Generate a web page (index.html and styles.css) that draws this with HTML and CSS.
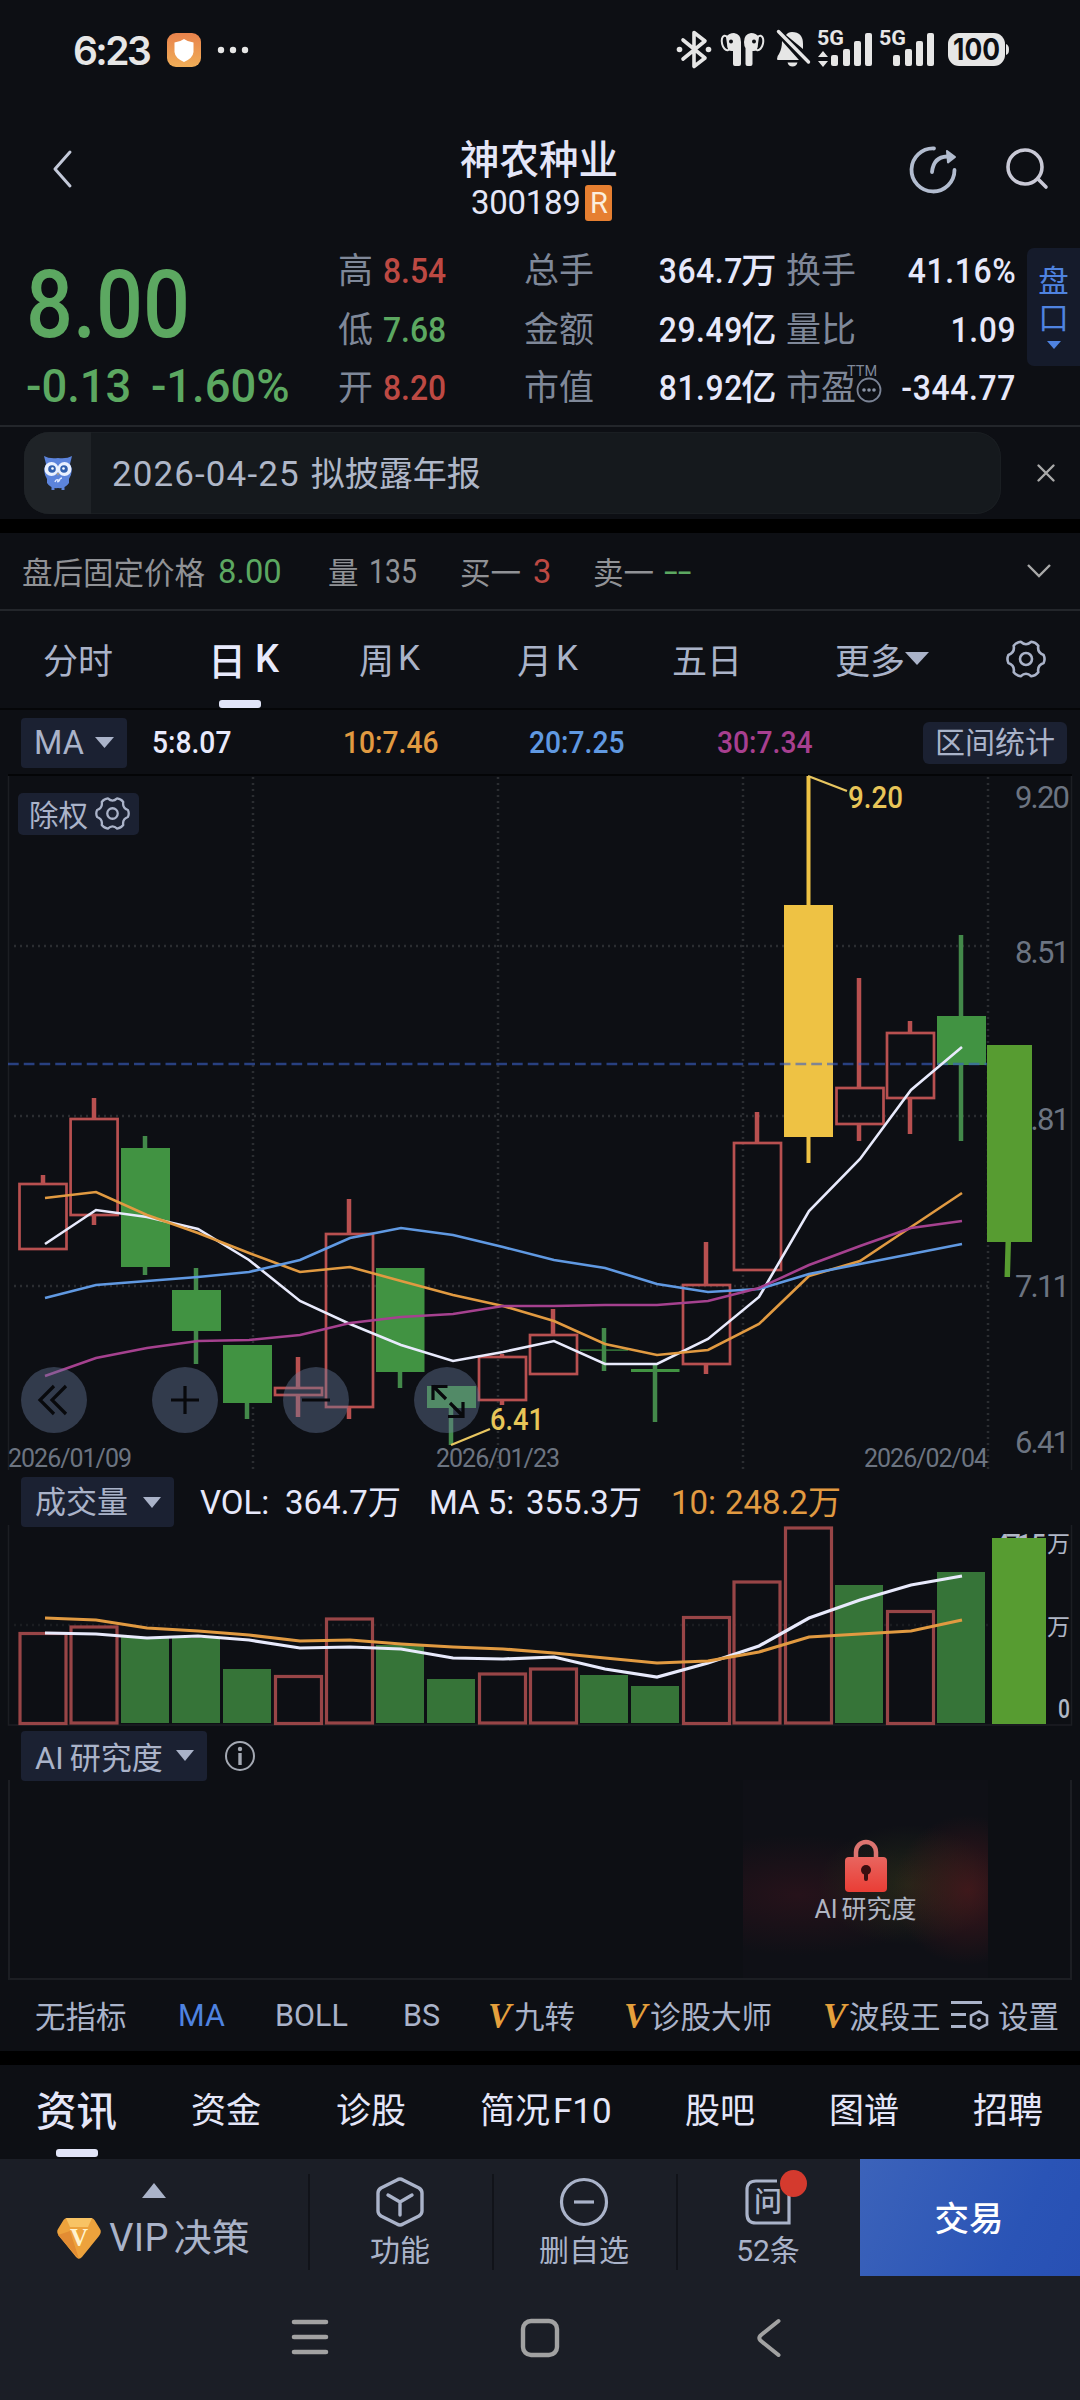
FILE: index.html
```html
<!DOCTYPE html>
<html lang="zh-CN">
<head>
<meta charset="utf-8">
<title>神农种业 300189</title>
<link rel="stylesheet" href="styles.css">
</head>
<body>
<svg class="defs" width="0" height="0">
  <symbol id="gear" viewBox="-20 -20 40 40">
    <path d="M17.6 -4Q19.500 0 17.6 4Q11 6.400 12.3 13.2Q9.5 16.8 5.3 17.2Q0 12.300 -5.3 17.2Q-9.5 16.8 -12.3 13.2Q-11 6.400 -17.6 4Q-19.500 0 -17.6 -4Q-11 -6.400 -12.3 -13.2Q-9.5 -16.8 -5.3 -17.2Q0 -12.300 5.3 -17.2Q9.5 -16.8 12.3 -13.2Q11 -6.400 17.6 -4Z" fill="none" stroke="currentColor" stroke-width="2.6" stroke-linejoin="round"/>
    <circle r="6" fill="none" stroke="currentColor" stroke-width="2.6"/>
  </symbol>
</svg>
<main class="screen">
  <header class="status">
    <span class="clock">6:23</span>
    <svg class="guard" width="34" height="34" viewBox="0 0 34 34"><defs><linearGradient id="og" x1="0" y1="0" x2="0" y2="1"><stop offset="0" stop-color="#e8824c"/><stop offset="1" stop-color="#f0ae58"/></linearGradient></defs><rect width="34" height="34" rx="9" fill="url(#og)"/><path d="M17 6Q21 9 26.500 9.500V19Q26 25 17 29Q8 25 7.500 19V9.500Q13 9 17 6Z" fill="#fff"/></svg>
    <svg class="dots" width="32" height="8" viewBox="0 0 32 8" fill="#e6e6e6"><circle cx="4" cy="4" r="3.200"/><circle cx="16" cy="4" r="3.200"/><circle cx="28" cy="4" r="3.200"/></svg>
    <svg class="radio" width="340" height="44" viewBox="672 28 340 44" fill="#e6e6e6">
      <path d="M683 40L705 58L694 66.500V32.500L705 41L683 59" fill="none" stroke="#e6e6e6" stroke-width="3.600" stroke-linejoin="round" stroke-linecap="round"/>
      <circle cx="679.500" cy="49.500" r="2.800"/><circle cx="708.500" cy="49.500" r="2.800"/>
      <g id="buds">
        <ellipse cx="726" cy="43" rx="4" ry="7.400" transform="rotate(-14 726 43)" fill="none" stroke="#e6e6e6" stroke-width="2"/>
        <path d="M726 37Q729 33 734 33Q741 34 741 42V64Q741 66 739 66H735Q733 66 733 64V51Q727 52 727 44Z"/><circle cx="731" cy="41.500" r="2" fill="#0d0f14"/>
        <ellipse cx="759" cy="43" rx="4" ry="7.400" transform="rotate(14 759 43)" fill="none" stroke="#e6e6e6" stroke-width="2"/>
        <path d="M759 37Q756 33 751 33Q744 34 744 42Q744 46 745.500 48V64Q745.500 66 747.500 66H750.500Q752.500 66 752.500 64V51Q758 52 758 44Z"/><circle cx="754" cy="41.500" r="2" fill="#0d0f14"/>
      </g>
      <path d="M777 59q0-3 2-5q3-5 3-13l17 19h-21q-1 0-1-1zM786 35q2-3 6-3q11 0 11 12v5zM787.500 62.500h10q-1 4-5 4t-5-4z"/>
      <path d="M778.500 31.500l30 30.500" stroke="#e6e6e6" stroke-width="3.400" stroke-linecap="round"/>
      <text x="817" y="45" class="gen" textLength="27" lengthAdjust="spacingAndGlyphs">5G</text>
      <path d="M823 51l5 6h-10zM823 67l-5-6h10z"/>
      <rect x="831" y="55" width="7" height="11" rx="2"/><rect x="843" y="49" width="7" height="17" rx="2"/><rect x="854" y="41" width="7" height="25" rx="2"/><rect x="865" y="33" width="7" height="33" rx="2"/>
      <text x="879" y="45" class="gen" textLength="27" lengthAdjust="spacingAndGlyphs">5G</text>
      <rect x="893" y="55" width="7" height="11" rx="2"/><rect x="905" y="49" width="7" height="17" rx="2"/><rect x="916" y="41" width="7" height="25" rx="2"/><rect x="927" y="33" width="7" height="33" rx="2"/>
      <rect x="948" y="33" width="57" height="33" rx="11"/><path d="M1006 44q3 1 3 5.500t-3 5.500z"/>
      <text x="953" y="60" class="batt" textLength="47" lengthAdjust="spacingAndGlyphs">100</text>
    </svg>
  </header>

  <nav class="titlebar">
    <svg width="20" height="40" viewBox="0 0 20 40" fill="none" stroke="#c3c9d9" stroke-width="3" stroke-linecap="round" stroke-linejoin="round"><path d="M17 3L2 20L17 37"/></svg>
    <div class="name"><h1>神农种业</h1><div class="code"><span>300189</span><b>R</b></div></div>
    <svg width="48" height="48" viewBox="0 0 48 48" fill="none" stroke="#b2bccf" stroke-width="3.800" stroke-linecap="round"><path d="M25 3.500A21.500 21.500 0 1 0 45.500 25"/><path d="M23 27Q24.500 12 38 11.500"/><path d="M38 6L46 12L39 17.500Z" fill="#b2bccf" stroke-width="2" stroke-linejoin="round"/></svg>
    <svg width="46" height="46" viewBox="1 0 46 46" fill="none" stroke="#c9c9d6" stroke-width="3.600" stroke-linecap="round"><circle cx="21" cy="21" r="17"/><path d="M34 33L42 41"/></svg>
  </nav>

  <section class="quote">
    <div class="price down"><div class="last">8.00</div><div class="chg"><span>-0.13</span><span>-1.60%</span></div></div>
    <dl class="stats">
      <dt>高</dt><dd class="up l">8.54</dd><dt>总手</dt><dd class="u">364.7<i>万</i></dd><dt>换手</dt><dd>41.16%</dd>
      <dt>低</dt><dd class="down l">7.68</dd><dt>金额</dt><dd class="u">29.49<i>亿</i></dd><dt>量比</dt><dd>1.09</dd>
      <dt>开</dt><dd class="up l">8.20</dd><dt>市值</dt><dd class="u">81.92<i>亿</i></dd><dt class="pe">市盈<sup>TTM</sup><svg width="26" height="26" viewBox="-13 -13 26 26"><circle r="11.500" fill="none" stroke="#7b8496" stroke-width="1.800"/><g fill="#8b94a6"><circle cx="-5" r="1.800"/><circle r="1.800"/><circle cx="5" r="1.800"/></g></svg></dt><dd>-344.77</dd>
    </dl>
    <div class="pankou"><span>盘</span><span>口</span><svg width="14" height="8"><path d="M0 0h14l-7 8z" fill="#4f83e0"/></svg></div>
  </section>

  <section class="notice">
    <div class="pill">
      <div class="owl"><svg width="34" height="36" viewBox="0 0 34 36"><path d="M3 1Q8 4 17 3Q26 4 31 1L29 9Q33 16 28 24V28Q24 34 17 33Q10 34 6 28V24Q1 16 5 9Z" fill="#5c84dc"/><circle cx="10.500" cy="14" r="7" fill="#e9f0ff"/><circle cx="23.500" cy="14" r="7" fill="#e9f0ff"/><circle cx="11" cy="14" r="3.800" fill="#315fae"/><circle cx="23" cy="14" r="3.800" fill="#315fae"/><circle cx="11.500" cy="13.500" r="1.300" fill="#fff"/><circle cx="22.500" cy="13.500" r="1.300" fill="#fff"/><path d="M15.500 18h3l-1.500 3z" fill="#a89a86"/><path d="M14 27q1-3 3-2q-1 3 1 1q1-3 3-3" stroke="#dbe6ff" fill="none" stroke-width="1.500"/><path d="M12 32v3M22 32v3" stroke="#5c84dc" stroke-width="3"/></svg></div>
      <p><time>2026-04-25</time>拟披露年报</p>
    </div>
    <svg width="18" height="18" viewBox="0 0 18 18" stroke="#a9a9a9" stroke-width="2.400" stroke-linecap="round"><path d="M1.500 1.500l15 15M16.500 1.500l-15 15"/></svg>
  </section>

  <section class="after">
    <span>盘后固定价格</span><span class="down n">8.00</span><span>量</span><span class="n q">135</span><span>买一</span><span class="up n">3</span><span>卖一</span><span class="down n dash">--</span>
    <svg width="24" height="14" viewBox="0 0 24 14" fill="none" stroke="#a9a9a9" stroke-width="2.400"><path d="M1 1l11 11l11-11"/></svg>
  </section>

  <nav class="periods">
    <a>分时</a><a class="on">日<em>K</em></a><a>周<em>K</em></a><a>月<em>K</em></a><a>五日</a><a>更多<svg width="24" height="13"><path d="M0 0h24l-12 13z" fill="#aab3c9"/></svg></a>
    <svg class="gear" width="40" height="40"><use href="#gear"/></svg>
  </nav>

  <section class="marow">
    <button class="sel">MA<svg width="19" height="11"><path d="M0 0h19l-9.500 11z"/></svg></button>
    <span class="c5">5:8.07</span><span class="c10">10:7.46</span><span class="c20">20:7.25</span><span class="c30">30:7.34</span>
    <button class="range">区间统计</button>
  </section>

  <section class="kline">
    <svg width="1080" height="704" viewBox="0 770 1080 704">
      <path d="M8.500 775.500V1470M1071.500 775.500V1470" class="frame"/><path d="M8 775H1072" stroke="#040507" stroke-width="2"/>
      <path d="M253 777V1469M498 777V1469M743 777V1469M988 777V1469" class="grid"/>
      <path d="M14 946H988M14 1116H988M14 1286H988" class="grid"/>
      <path class="wick red" d="M43 1175V1183M94 1098V1119M94 1215V1225M298 1357V1388M298 1395V1417M349 1199V1234M349 1407V1419M502 1354V1357M502 1400V1405M553 1309V1335M706 1242V1285M706 1364V1374M757 1112V1143M859 978V1088M859 1124V1141M910 1021V1033M910 1098V1134"/>
      <g class="red box">
        <rect x="19.500" y="1184" width="47" height="65"/><rect x="70.600" y="1119" width="47" height="96"/>
        <rect x="275" y="1388" width="47" height="7"/><rect x="326" y="1234" width="47" height="173"/>
        <rect x="479" y="1357" width="47" height="43"/><rect x="530" y="1335" width="47" height="39"/>
        <rect x="683" y="1285" width="47" height="79"/><rect x="734" y="1143" width="47" height="127"/>
        <rect x="836.500" y="1088" width="47" height="36"/><rect x="887" y="1033" width="47" height="65"/>
      </g>
      <g fill="#419342">
        <rect x="121" y="1148" width="49" height="119"/><rect x="172" y="1290" width="49" height="41"/><rect x="223" y="1345" width="49" height="58"/><rect x="376" y="1268" width="48.500" height="104"/><rect x="427" y="1386" width="49" height="22"/><rect x="580" y="1349.500" width="48" height="1.200"/><rect x="631" y="1369" width="48.500" height="3"/><rect x="937" y="1016" width="49" height="49"/>
      </g>
      <path class="wick" stroke="#43894a" d="M145 1136V1148M145 1267V1275M196 1268V1290M196 1331V1364M247 1403V1419M400 1372V1388M451 1408V1445M604 1328V1371M655 1363V1422M961 935V1016M961 1065V1141"/>
      <rect x="784" y="905" width="49" height="232" fill="#eec244"/>
      <path d="M808.500 776V905M808.500 1137V1163" stroke="#eec244" stroke-width="4"/>
      <path d="M8 1064H987" stroke="#3a5fc4" stroke-opacity=".62" stroke-width="2.400" stroke-dasharray="10.700 5.050"/>
      <g class="ma">
        <polyline stroke="#e8eafc" points="45,1244 96,1210 147,1217 198,1229 249,1260 300,1301 350,1324 401,1345 453,1361 503,1352 554,1341 605,1364 657,1364 708,1339 759,1297 809,1211 860,1159 911,1090 962,1047"/>
        <polyline stroke="#e19a41" points="45,1198 96,1192 147,1215 198,1233 249,1253 300,1272 350,1267 401,1281 453,1295 503,1306 554,1321 605,1344 657,1355 708,1350 759,1324 809,1276 860,1261 911,1227 962,1193"/>
        <polyline stroke="#6099e2" points="45,1298 96,1285 147,1281 198,1277 249,1272 300,1260 350,1238 401,1228 453,1235 503,1247 554,1260 605,1268 657,1284 708,1292 759,1289 809,1274 860,1264 911,1254 962,1244"/>
        <polyline stroke="#a5418f" points="45,1376 96,1358 147,1348 198,1341 249,1340 300,1335 350,1323 401,1317 453,1314 503,1306 554,1306 605,1305 657,1305 708,1301 759,1288 809,1265 860,1246 911,1228 962,1221"/>
      </g>
      <path d="M808 776L847 791M451 1445L490 1429" stroke="#e8c660" stroke-width="2.400"/>
      <g class="lab" fill="#e8c558"><text x="848" y="808" textLength="55" lengthAdjust="spacingAndGlyphs">9.20</text><text x="490" y="1430" textLength="54" lengthAdjust="spacingAndGlyphs">6.41</text></g>
      <g class="lab axis"><text x="1015" y="808" textLength="55">9.20</text><text x="1015" y="963" textLength="55">8.51</text><text x="1015" y="1130" textLength="55">7.81</text><text x="1015" y="1297" textLength="55">7.11</text><text x="1015" y="1453" textLength="55">6.41</text></g>
      <g class="date"><text x="8" y="1467" textLength="124">2026/01/09</text><text x="436" y="1467" textLength="124">2026/01/23</text><text x="864" y="1467" textLength="124">2026/02/04</text></g>
      <path d="M987 1045H1032V1242H1011L1010 1277H1004.500L1005.500 1242H987Z" fill="#579c31"/>
      <g fill="#6b7c9f" fill-opacity=".4"><circle cx="54" cy="1400" r="33"/><circle cx="185" cy="1400" r="33"/><circle cx="316" cy="1400" r="33"/><circle cx="447" cy="1400" r="33"/></g>
      <g fill="none" stroke="#08090c" stroke-width="3.200">
        <path d="M54 1386L40 1400L54 1414M66 1386L52 1400L66 1414M171 1400H199M185 1386V1414M302 1400H330M433 1386L446 1399M447.500 1386.500H433V1400M450 1403L463 1416M463 1402V1416.500H448"/>
      </g>
    </svg>
    <button class="chuquan">除权<svg width="35" height="35"><use href="#gear"/></svg></button>
  </section>

  <section class="volrow">
    <button class="sel">成交量<svg width="18" height="11"><path d="M0 0h18l-9 11z"/></svg></button>
    <span>VOL:</span><span>364.7万</span><span>MA 5:</span><span>355.3万</span><span class="c10">10:</span><span class="c10">248.2万</span>
  </section>

  <section class="vol">
    <svg width="1080" height="204" viewBox="0 1525 1080 204">
      <path d="M8.500 1525V1725H1071.500V1525" class="frame"/><path d="M14 1625H988" class="grid faint"/>
      <g class="lab small" fill="#b0b7c6"><text x="995" y="1553" textLength="51">471.5</text><text x="1047" y="1552" class="cj">万</text><text x="995" y="1636" textLength="50">335.8</text><text x="1047" y="1635" class="cj">万</text><text x="1058" y="1718" textLength="12" lengthAdjust="spacingAndGlyphs">0</text></g>
      <g class="red box v">
        <rect x="20" y="1633.500" width="46" height="90"/><rect x="71" y="1627" width="46" height="96"/><rect x="275.500" y="1676.500" width="46" height="47"/><rect x="326.500" y="1619" width="46" height="104"/><rect x="479.500" y="1674" width="46" height="49"/><rect x="530.500" y="1669" width="46" height="54"/><rect x="683.500" y="1617.500" width="46" height="106"/><rect x="734" y="1582" width="46" height="141"/><rect x="785.500" y="1528" width="46" height="195"/><rect x="887.500" y="1611.500" width="46" height="112"/>
      </g>
      <path fill="#367438" d="M121 1637h48v86h-48zM172 1638h48v85h-48zM223 1669h48v54h-48zM376 1645h48v78h-48zM427 1679h48v44h-48zM580 1675h48v48h-48zM631 1686h48v37h-48zM835 1585h48v138h-48zM937 1572h48v151h-48z"/>
      <g class="ma v">
        <polyline stroke="#e8eafc" points="45,1633 96,1634 147,1638 198,1636 249,1640 300,1648 350,1647 401,1649 453,1658 503,1659 554,1657 605,1669 657,1677 708,1663 759,1646 809,1618 860,1600 911,1585 962,1576"/>
        <polyline stroke="#e19a41" points="45,1618 96,1620 147,1628 198,1631 249,1635 300,1641 350,1640 401,1644 453,1647 503,1649 554,1653 605,1658 657,1663 708,1661 759,1652 809,1637 860,1634 911,1631 962,1620"/>
      </g>
      <rect x="992" y="1538" width="54" height="186" fill="#579c31"/>
    </svg>
  </section>

  <section class="airow">
    <button class="sel"><span><em>AI</em>研究度</span><svg width="18" height="11"><path d="M0 0h18l-9 11z"/></svg></button>
    <svg width="32" height="32" viewBox="-16 -16 32 32" fill="#a4a9b3"><circle r="14" fill="none" stroke="#a4a9b3" stroke-width="2"/><circle cy="-7" r="2.200"/><rect x="-1.700" y="-3" width="3.400" height="12"/></svg>
  </section>
  <section class="ai">
    <div class="lockpane">
      <svg width="42" height="53" viewBox="0 0 42 53"><defs><linearGradient id="lk" x1="0" y1="0" x2="0" y2="1"><stop offset="0" stop-color="#e8655f"/><stop offset="1" stop-color="#ea3d35"/></linearGradient></defs><path d="M11 20V13A10 10 0 0 1 31 13V20" fill="none" stroke="#dc7470" stroke-width="4.500"/><rect y="18" width="42" height="35" rx="4" fill="url(#lk)"/><circle cx="21" cy="31" r="5" fill="#3a0e10"/><rect x="19" y="32" width="4" height="10" rx="2" fill="#3a0e10"/></svg>
      <span><em>AI</em>研究度</span>
    </div>
  </section>

  <nav class="indicators">
    <a>无指标</a><a class="sel-i">MA</a><a>BOLL</a><a>BS</a><a><b>V</b>九转</a><a><b>V</b>诊股大师</a><a><b>V</b>波段王</a>
    <svg width="38" height="30" viewBox="0 0 38 30" fill="none" stroke="#aab3c9" stroke-width="3.200"><path d="M0 2.500H31M0 14.500H15M0 26.500H15"/><path d="M28 11.500L36 15.500V24.500L28 28.500L20 24.500V15.500Z" stroke-width="2.600"/><circle cx="28" cy="20" r="2" fill="#aab3c9" stroke="none"/></svg>
    <a>设置</a>
  </nav>

  <nav class="infotabs"><a class="on">资讯</a><a>资金</a><a>诊股</a><a>简况<em>F10</em></a><a>股吧</a><a>图谱</a><a>招聘</a></nav>

  <footer class="actions">
    <div class="vip">
      <svg class="tri" width="24" height="15"><path d="M12 0l12 15H0z" fill="#aab3c9"/></svg>
      <div class="viprow"><svg width="44" height="43" viewBox="0 0 44 43"><path d="M10 1H34Q36 1 37.500 3L43 12Q45 15 42 19L25 40Q22 43.500 19 40L2 19Q-1 15 1 12L6.500 3Q8 1 10 1Z" fill="#eda23c"/><path d="M9 1H35L31 10H13Z" fill="#f8c364"/><path d="M1 18L13 14L22 42Z" fill="#e28c33"/><text x="22" y="29" text-anchor="middle" class="gemv">V</text></svg><span><em>VIP</em>决策</span></div>
    </div>
    <div class="act"><svg width="50" height="50" viewBox="-25 -25 50 50" fill="none" stroke="#aab3c9" stroke-width="3.400" stroke-linejoin="round" stroke-linecap="round"><path d="M-3-22Q0-24 3-22L19-14Q22-12 22-9V9Q22 12 19 14L3 22Q0 24-3 22L-19 14Q-22 12-22 9V-9Q-22-12-19-14Z"/><path d="M-12-7L0 0L12-7M0 0V13"/></svg><span>功能</span></div>
    <div class="act"><svg width="50" height="50" viewBox="-25 -25 50 50" fill="none" stroke="#aab3c9" stroke-width="3.200"><circle r="22.500"/><path d="M-10 0H10"/></svg><span>删自选</span></div>
    <div class="act"><svg width="50" height="50" viewBox="-25 -25 50 50"><path d="M21-10V21H-12Q-21 21-21 12V-12Q-21-21-12-21H9" fill="none" stroke="#aab3c9" stroke-width="3.200"/><text x="0" y="10" text-anchor="middle" class="wen">问</text></svg><span>52条</span><i class="badge"></i></div>
    <div class="trade">交易</div>
  </footer>
  <div class="sysnav">
    <svg width="38" height="38" viewBox="0 0 38 38" stroke="#a2a2a2" stroke-width="4.600" stroke-linecap="round"><path d="M3 4H35M3 19H35M3 34H35"/></svg>
    <svg width="40" height="40" viewBox="0 0 40 40" fill="none" stroke="#a2a2a2" stroke-width="4.400"><rect x="3" y="3" width="34" height="34" rx="8"/></svg>
    <svg width="26" height="40" viewBox="1.500 0 26 40" fill="none" stroke="#a2a2a2" stroke-width="4" stroke-linecap="round" stroke-linejoin="round"><path d="M23 3L5 17.500Q2.500 20 5 22.500L23 37"/></svg>
  </div>
</main>
</body>
</html>
```
FILE: styles.css
```css
* { box-sizing: border-box; margin: 0; padding: 0; }
body { background: #0d0f14; color: #aab3c9; font-family: Roboto, "Noto Sans CJK SC", sans-serif; }
svg { display: block; flex: none; overflow: visible; }
.defs { position: absolute; }
.screen { width: 1080px; height: 2400px; overflow: hidden; white-space: nowrap; display: flex; flex-direction: column; }
.screen > * { flex: none; }
button { border: 0; font: inherit; color: #aab3c9; background: #1b2132; }
i, em { font-style: normal; }
.up { color: #bd4943; }
.down { color: #5ca861; }
.c5 { color: #e8eafc; } .c10 { color: #e19a41; } .c20 { color: #6099e2; } .c30 { color: #a83f90; }

.status { height: 100px; display: grid; grid-template-columns: 93px 50px 455px 1fr; padding-left: 73px; align-items: center; }
.clock { font-family: Inter; font-size: 39px; font-weight: 600; letter-spacing: -2.6px; color: #e6e6e6; }
.guard, .dots, .radio { margin-left: 1px; }
.gen { font: 700 20.500px Roboto; }
.batt { font: 700 30px Inter; fill: #0d0f14; }

.titlebar { height: 140px; display: grid; grid-template-columns: 407px 449px 96px 1fr; padding: 0 0 29px 53px; align-items: center; }
.titlebar svg { margin-top: 16px; }
.name { width: 157px; }
.name h1 { font-size: 39.500px; line-height: 46px; margin-top: 38px; font-weight: 500; color: #e4e6f8; }
.code { display: flex; align-items: center; gap: 5px; line-height: 36px; padding-left: 11px; font-size: 33px; letter-spacing: -.3px; margin-top: 1px; color: #e4e6f8; height: 36px; }
.code b { width: 27px; height: 36px; border-radius: 3px; background: #e67f31; font-weight: 400; text-align: center; font-size: 29px; letter-spacing: 0; color: #fbeedd; }

.quote { height: 187px; display: grid; grid-template-columns: 312px 689px 53px; border-bottom: 2px solid #23262b; padding-left: 26px; }
.last { font-size: 94px; font-weight: 500; line-height: 90px; margin-top: 20px; transform: scaleX(.88); transform-origin: left; }
.chg { display: flex; gap: 20px; font-size: 46px; line-height: 50px; font-weight: 500; margin-top: 11px; transform: scaleX(.985); transform-origin: left; }
.stats { display: grid; grid-template-columns: 46px 140px 89px 160px 111px 132px; grid-template-rows: 58px 59px 58px; align-items: center; margin-top: 3px; }
.stats dt { font-size: 35px; color: #7f8899; line-height: 46px; }
.stats dd { font-size: 35px; line-height: 46px; font-weight: 500; color: #e6e8fa; justify-self: end; letter-spacing: .7px; transform: scaleX(.91); transform-origin: right; }
.stats dd.l { justify-self: start; transform-origin: left; letter-spacing: 0; margin-left: -1px; }
.stats dd.u { margin-right: -3px; }
.stats dd i { font-size: 35.500px; line-height: 40px; display: inline-block; margin-left: 1px; transform: scaleX(1.09); transform-origin: right; letter-spacing: 0; }
.stats dd.up { color: #bd4943; } .stats dd.down { color: #5ca861; }
.stats dt:nth-of-type(3n) { padding-left: 13px; }
.pe { position: relative; }
.pe sup { position: absolute; left: 74px; top: -1px; font-size: 14.500px; line-height: 14px; }
.pe svg { position: absolute; left: 83px; top: 11px; }
.pankou { height: 118px; margin-top: 8px; border-radius: 7px 0 0 7px; background: #151b2b; color: #4f83e0; font-size: 30.500px; line-height: 37px; display: flex; flex-direction: column; align-items: center; padding: 15px 0 0; }
.pankou svg { margin-top: 4px; }

.notice { height: 92px; padding: 5px 25px 5px 24px; display: flex; justify-content: space-between; align-items: center; }
.pill { width: 977px; height: 82px; flex: none; border-radius: 25px; background: #15191d; display: flex; align-items: center; overflow: hidden; box-shadow: inset 0 0 0 1px #1a1e22; }
.owl { width: 67px; height: 82px; background: #1f2327; display: grid; place-items: center; }
.pill p { padding: 0 0 3px 21px; font-size: 34px; color: #afb7c8; }
.pill time { font-size: 35px; letter-spacing: 1.1px; margin-right: 11px; }

.after { height: 92px; border-top: 14px solid #000; border-bottom: 2px solid #23262b; display: grid; grid-template-columns: 196px 110px 42px 90px 73px 60px 71px 363px 1fr; align-items: center; padding-left: 22px; font-size: 30.500px; color: #909296; }
.after .n { font-size: 33px; transform: scaleX(.99); transform-origin: left; }
.after .q { transform: translateX(-1px) scaleX(.86); }
.after .dash { transform: scaleX(1.5); }

.periods { height: 99px; display: grid; grid-template-columns: 168px 148px 158px 155px 163px 171px 1fr; padding: 0 0 2px 43px; align-items: center; font-size: 35px; border-bottom: 2px solid #050608; }
.periods a { display: flex; align-items: center; height: 95px; }
.periods em { margin-left: 4px; }
.periods .on { font-size: 38px; font-weight: 500; color: #e8eafc; position: relative; margin-left: -3px; }
.periods .on em { margin-left: 9px; }
.on::after { content: ""; position: absolute; left: 11px; bottom: -2px; width: 42px; height: 8px; border-radius: 3px; background: #e2e5f8; }

.marow { height: 60px; display: grid; grid-template-columns: 132px 191px 186px 188px 205px 144px; padding: 5px 0 0 21px; align-items: center; font-size: 31px; font-weight: 500; }
.marow span { transform: scaleX(.91); transform-origin: left; margin-left: -1px; }
.sel { height: 50px; display: flex; align-items: center; justify-content: space-between; padding: 0 13px 2px 14px; border-radius: 4px; font-weight: 400; }
.sel svg { fill: #aab3c9; }
.marow .sel { width: 106px; font-size: 32.500px; padding: 0 13px; }
.range { height: 42px; border-radius: 6px; font-size: 30px; line-height: 42px; font-weight: 400; }

.kline { height: 704px; position: relative; }
.frame { fill: none; stroke: #1c1e23; stroke-width: 1.500px; }
.grid { fill: none; stroke: #2b2d31; stroke-width: 2.500px; stroke-dasharray: 2 4; }
.faint { stroke: #1b1d21; }
.red { stroke: #b85050; fill: none; }
.box { stroke-width: 2.700px; }
.box.v { stroke: #984547; stroke-width: 3.200px; }
.wick { stroke-width: 4.500px; }
.ma { fill: none; stroke-width: 2.600px; }
.ma.v { stroke-width: 3.200px; }
.lab { font: 500 31px Roboto; }
.axis { font-weight: 400; fill: #6c7481; }
.small { font-size: 26px; }
.cj { font: 400 23px "Noto Sans CJK SC"; }
.date { font: 400 25px Roboto; fill: #6c7481; }
.chuquan { position: absolute; left: 18px; top: 23px; width: 121px; height: 42px; border-radius: 5px; font-size: 29.500px; display: flex; align-items: center; justify-content: space-between; padding: 0 9px 2px 11px; }

.volrow { height: 51px; display: grid; grid-template-columns: 179px 85px 144px 97px 145px 54px 1fr; padding: 3px 0 0 21px; align-items: start; color: #e6e8fa; font-size: 33px; line-height: 51px; }
.volrow .c10 { color: #e19a41; }
.volrow .sel { width: 153px; font-size: 31px; padding-bottom: 0; }
.vol { height: 204px; }
.airow { height: 52px; display: flex; gap: 17px; align-items: center; padding: 0 0 0 21px; margin-top: 1px; }
.airow .sel { width: 186px; font-size: 31px; }
.airow em { margin-right: 6px; }
.ai { height: 200px; margin: -2px 8px 0; border: 2px solid #1c1e23; border-top: 0; padding-left: 733px; }
.lockpane { width: 245px; height: 198px; padding-top: 59px; display: flex; flex-direction: column; align-items: center; background: radial-gradient(ellipse 75px 75px at 225px 110px, rgba(90,25,30,.6), transparent), radial-gradient(ellipse 90px 60px at 165px 105px, rgba(45,55,25,.55), transparent), radial-gradient(ellipse 150px 60px at 55px 115px, rgba(60,20,30,.5), transparent), #0f1016; }
.lockpane span { font-size: 25px; line-height: 36px; color: #b0b5c2; }
.lockpane em { margin-right: 4px; }

.indicators { height: 71px; display: grid; grid-template-columns: 143px 97px 128px 85px 136px 199px 128px 47px 1fr; padding: 0 0 1px 35px; align-items: center; font-size: 30.500px; }
.indicators b { font: italic 700 35px "Liberation Serif"; color: #e5a03c; margin-right: 1px; display: inline-block; width: 25px; line-height: 30px; }
.indicators .sel-i { color: #4f83e0; }
.infotabs { height: 108px; border-top: 14px solid #000; display: grid; grid-template-columns: 155px 145px 144px 205px 144px 144px 1fr; padding-left: 36px; font-size: 35px; color: #e4e6f8; }
.infotabs a { height: 94px; line-height: 94px; }
.infotabs em { margin-left: 3px; }
.infotabs .on { font-size: 40.500px; font-weight: 500; position: relative; }
.infotabs .on::after { left: 20px; bottom: 2px; }

.actions { height: 117px; background: #1b1e26; display: grid; grid-template-columns: 308px 184px 184px 184px 220px; font-size: 30px; }
.vip { display: flex; flex-direction: column; align-items: center; padding-top: 24px; }
.viprow { display: flex; align-items: center; gap: 8px; font-size: 38px; line-height: 44px; margin: 18px 1px 0 0; }
.viprow em { margin-right: 5px; letter-spacing: .3px; }
.gemv { font: 700 25px "Liberation Serif"; fill: #fff3cf; }
.act { position: relative; display: flex; flex-direction: column; align-items: center; padding-top: 18px; background: linear-gradient(#111319, #111319) 0 15px / 2px 96px no-repeat; }
.act span { line-height: 40px; margin-top: 4px; }
.wen { font: 500 28px "Noto Sans CJK SC"; fill: #aab3c9; }
.badge { position: absolute; left: 104px; top: 11px; width: 27px; height: 27px; border-radius: 50%; background: #d43a2e; }
.trade { display: grid; place-items: center; font-size: 34.500px; color: #fff; font-weight: 500; background: linear-gradient(115deg, #3c63ba, #2a54b6 70%, #2850b4); padding: 0 2px 3px 0; }
.sysnav { height: 124px; background: #1b1e26; display: grid; grid-template-columns: 229px 237px 1fr; padding: 42px 0 0 291px; align-items: start; }
```
